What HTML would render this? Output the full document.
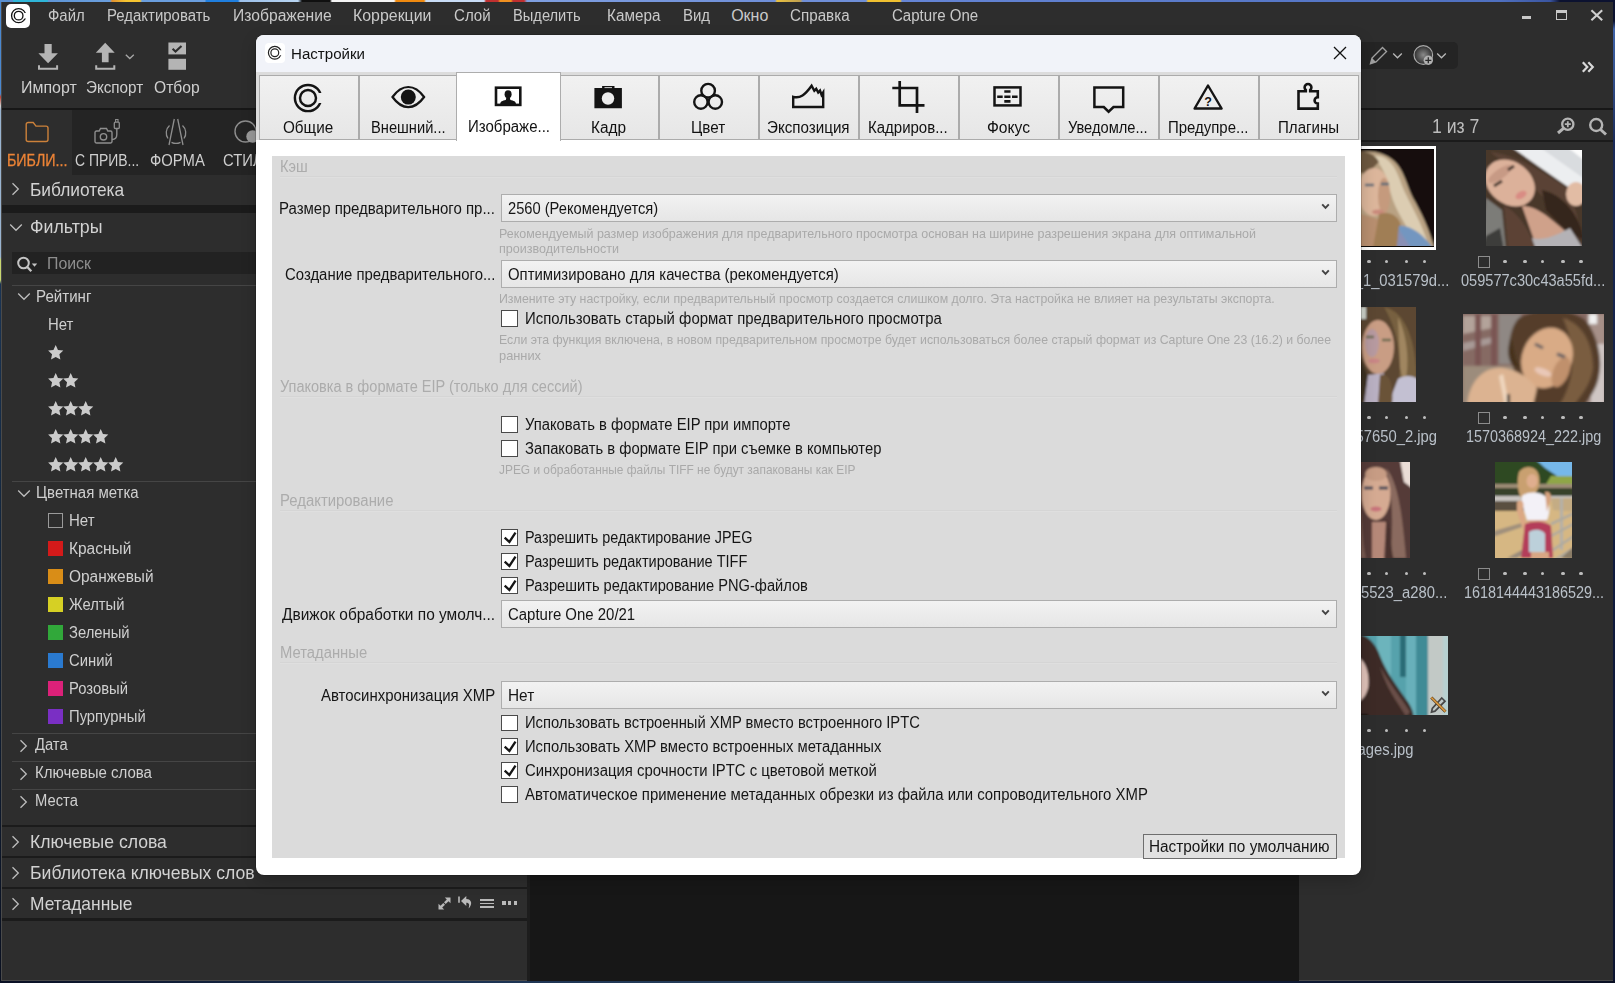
<!DOCTYPE html>
<html lang="ru"><head><meta charset="utf-8"><title>Capture One</title>
<style>

html,body{margin:0;padding:0}
body{width:1615px;height:983px;position:relative;overflow:hidden;background:#0b1020;font-family:'Liberation Sans',sans-serif}
body div,body span,body svg{position:absolute;box-sizing:border-box}
body span{white-space:pre}
#win div,#win span,#win svg,#dlg div,#dlg span,#dlg svg{position:absolute}

</style></head>
<body>
<div style="left:0;top:0;width:1615px;height:2.500px;background:linear-gradient(90deg,#5a8fd0 0,#5a8fd0 13px,#2fb5d8 13px,#2fb5d8 48px,#5f96d6 48px,#6a9ede 110px,#e09030 112px,#f5c430 126px,#f5c430 140px,#6a9ede 142px,#6a9ede 205px,#1f7fe0 206px,#1f7fe0 238px,#9cc0ea 240px,#b8d4f0 298px,#101010 302px,#101010 330px,#f4f4f4 332px,#f4f4f4 394px,#f08a10 396px,#f08a10 424px,#c8dcf5 426px,#c8dcf5 484px,#c03030 486px,#c03030 498px,#f09020 500px,#f09020 511px,#c03030 513px,#c03030 524px,#7f9fe0 527px,#6f8fd8 775px,#e8c040 777px,#c0a050 800px,#6f8fd8 803px,#6f8fd8 866px,#f0c030 868px,#f0c030 900px,#6585d5 902px,#4f70c0 1500px,#3a55a0 1550px,#0c1230 1560px,#0c1230 1615px)"></div>
<div style="left:0;top:2px;width:1.500px;height:981px;background:linear-gradient(180deg,#4a88d0 0,#4a88d0 92px,#c04030 95px,#d0d0d0 104px,#9ab4d0 108px,#9ab4d0 255px,#c8d870 258px,#c8d870 278px,#1a3454 282px,#142840 500px,#0a1020 983px)"></div>
<div style="left:1612px;top:3px;width:3px;height:980px;background:linear-gradient(180deg,#0c1230 0,#0c1230 18px,#3f62a8 26px,#34528f 70px,#1a2a58 140px,#101c40 500px,#0c1430 983px)"></div>
<div style="left:0;top:981px;width:1615px;height:2px;background:linear-gradient(90deg,#0a1024,#1a3050 400px,#28405c 800px,#101c38 1200px,#0a1024)"></div>
<div style="left:1.3px;top:2.2px;width:1611.5px;height:979px;background:#2d2d2d;border:1px solid #4a4a4a;border-width:0 0 1px 1px"></div>
<div style="left:6px;top:4px;width:24px;height:24px;background:#fff;border-radius:5px"></div>
<svg style="left:7.61px;top:5.46px" width="21.28" height="21.28" viewBox="-10.64 -10.64 21.28 21.28"><defs><clipPath id="cl1"><path clip-rule="evenodd" d="M-10.64 -10.64H10.64V10.64H-10.64zM0 -2.75H10.64V2.75H0z"/></clipPath></defs><circle r="4.32" fill="none" stroke="#111" stroke-width="1.32"/><circle r="7.07" fill="none" stroke="#111" stroke-width="1.32" clip-path="url(#cl1)"/></svg>
<span style="left:48.45px;top:5px;font-size:16px;line-height:22px;color:#c9c9c9;transform:scaleX(0.9323);transform-origin:0 0;">Файл</span>
<span style="left:107.35px;top:5px;font-size:16px;line-height:22px;color:#c9c9c9;transform:scaleX(0.9344);transform-origin:0 0;">Редактировать</span>
<span style="left:232.65px;top:5px;font-size:16px;line-height:22px;color:#c9c9c9;transform:scaleX(0.9790);transform-origin:0 0;">Изображение</span>
<span style="left:353.45px;top:5px;font-size:16px;line-height:22px;color:#c9c9c9;transform:scaleX(0.9940);transform-origin:0 0;">Коррекции</span>
<span style="left:453.95px;top:5px;font-size:16px;line-height:22px;color:#c9c9c9;transform:scaleX(0.9428);transform-origin:0 0;">Слой</span>
<span style="left:512.85px;top:5px;font-size:16px;line-height:22px;color:#c9c9c9;transform:scaleX(0.9169);transform-origin:0 0;">Выделить</span>
<span style="left:606.65px;top:5px;font-size:16px;line-height:22px;color:#c9c9c9;transform:scaleX(0.9545);transform-origin:0 0;">Камера</span>
<span style="left:682.55px;top:5px;font-size:16px;line-height:22px;color:#c9c9c9;transform:scaleX(0.9353);transform-origin:0 0;">Вид</span>
<span style="left:731.15px;top:5px;font-size:16px;line-height:22px;color:#c9c9c9;">Окно</span>
<span style="left:789.95px;top:5px;font-size:16px;line-height:22px;color:#c9c9c9;transform:scaleX(0.9492);transform-origin:0 0;">Справка</span>
<span style="left:892.15px;top:5px;font-size:16px;line-height:22px;color:#c9c9c9;transform:scaleX(0.9407);transform-origin:0 0;">Capture One</span>
<div style="left:1522px;top:16px;width:9px;height:3px;background:#c8c8c8;"></div>
<div style="left:1556px;top:10px;width:11.400px;height:10.200px;border:1.300px solid #c8c8c8;border-top-width:3.300px"></div>
<svg style="left:1589px;top:8px" width="16" height="14" viewBox="0 0 16 14"><path d="M2.4 2.2L13.2 12.2M13.2 2.2L2.4 12.2" stroke="#cfcfcf" stroke-width="2.1" fill="none"/></svg>
<svg style="left:30px;top:36px" width="180" height="40" viewBox="30 36 180 40"><path d="M44.500 44h7.200v9.300h6.200L48.100 63.300 38.400 53.300h6.100z" fill="#b4b4b4"/><path d="M39 65.200v3.600h18.100v-3.600" fill="none" stroke="#b4b4b4" stroke-width="2"/><path d="M101.900 62.200h6.700v-9.500h6.100L105.200 42.700 95.800 52.700h6.100z" fill="#b4b4b4"/><path d="M96.200 65.200v3.600h18.100v-3.600" fill="none" stroke="#b4b4b4" stroke-width="2"/><path d="M125.800 54.800l4 3.700 4-3.700" fill="none" stroke="#a8a8a8" stroke-width="1.300"/><rect x="168.400" y="42.500" width="17.600" height="11.900" fill="#b4b4b4"/><rect x="168.400" y="58.800" width="17.600" height="11" fill="#b4b4b4"/><path d="M172.600 48.800l2.900 2.700 6-5.600" fill="none" stroke="#2d2d2d" stroke-width="2.100"/></svg>
<span style="left:20.65px;top:77px;font-size:16px;line-height:22px;color:#cfcfcf;transform:scaleX(0.9954);transform-origin:0 0;">Импорт</span>
<span style="left:85.95px;top:77px;font-size:16px;line-height:22px;color:#cfcfcf;transform:scaleX(0.9510);transform-origin:0 0;">Экспорт</span>
<span style="left:153.95px;top:77px;font-size:16px;line-height:22px;color:#cfcfcf;transform:scaleX(0.9774);transform-origin:0 0;">Отбор</span>
<div style="left:2px;top:107.8px;width:1611px;height:2px;background:#171717;"></div>
<div style="left:2px;top:109.5px;width:526px;height:65px;background:#242424;"></div>
<div style="left:2px;top:109.5px;width:70px;height:65px;background:#2d2d2d;"></div>
<svg style="left:24px;top:120px" width="28" height="24" viewBox="0 0 28 24"><path d="M2.200 4.500a2 2 0 0 1 2-2h5l2.800 3.600h10a2 2 0 0 1 2 2V19.500a2 2 0 0 1-2 2h-17.800a2 2 0 0 1-2-2z" fill="none" stroke="#cc813a" stroke-width="1.4"/></svg>
<span style="left:7.15px;top:150px;font-size:16px;line-height:22px;color:#ee8436;transform:scaleX(0.8915);transform-origin:0 0;-webkit-text-stroke:0.28px #ee8436;">БИБЛИ...</span>
<svg style="left:92px;top:118px" width="30" height="28" viewBox="0 0 30 28"><path d="M3 14.500a1.500 1.500 0 0 1 1.500-1.500h2.700l1.300-2.500h6l1.300 2.500h2.700a1.500 1.500 0 0 1 1.500 1.500v9a1.500 1.500 0 0 1-1.500 1.500h-14a1.500 1.500 0 0 1-1.500-1.500z" fill="none" stroke="#8e8e8e" stroke-width="1.400"/><circle cx="11.500" cy="18.800" r="3.200" fill="none" stroke="#8e8e8e" stroke-width="1.400"/><path d="M20 21.500c3.500 0 4.800-1.500 4.800-5V10.500" fill="none" stroke="#8e8e8e" stroke-width="1.400"/><rect x="22.300" y="4.200" width="5" height="6.300" rx="1" fill="none" stroke="#8e8e8e" stroke-width="1.300"/><path d="M23.600 4V1.500h2.400V4" fill="none" stroke="#8e8e8e" stroke-width="1.100"/></svg>
<span style="left:74.65px;top:150px;font-size:16px;line-height:22px;color:#cfcfcf;transform:scaleX(0.8710);transform-origin:0 0;">С ПРИВ...</span>
<svg style="left:163px;top:117px" width="26" height="30" viewBox="0 0 26 30"><path d="M11.300 2L6 28M14.700 2L20 28" fill="none" stroke="#8e8e8e" stroke-width="1.300"/><path d="M6.500 8.500a10 10 0 0 0-1.500 13M19.500 8.500a10 10 0 0 1 1.500 13M8.500 25.300a10 10 0 0 0 9 0" fill="none" stroke="#8e8e8e" stroke-width="1.300"/></svg>
<span style="left:149.55px;top:150px;font-size:16px;line-height:22px;color:#cfcfcf;transform:scaleX(0.9268);transform-origin:0 0;">ФОРМА</span>
<svg style="left:232px;top:118px" width="30" height="30" viewBox="0 0 30 30"><circle cx="13.500" cy="13.500" r="10.500" fill="none" stroke="#8e8e8e" stroke-width="1.400"/><circle cx="20.500" cy="18.500" r="6.200" fill="#9a9a9a"/></svg>
<span style="left:222.75px;top:150px;font-size:16px;line-height:22px;color:#cfcfcf;transform:scaleX(0.9250);transform-origin:0 0;">СТИЛ</span>
<svg style="left:11px;top:182px" width="9" height="14" viewBox="0 0 9 14"><path d="M1.500 1.200L7.300 7 1.500 12.800" fill="none" stroke="#bdbdbd" stroke-width="1.3"/></svg>
<span style="left:30.04px;top:177px;font-size:18.5px;line-height:26px;color:#d2d2d2;transform:scaleX(0.9356);transform-origin:0 0;">Библиотека</span>
<div style="left:2px;top:205px;width:526px;height:7.5px;background:#1b1b1b;"></div>
<svg style="left:9px;top:223px" width="14" height="9" viewBox="0 0 14 9"><path d="M1.200 1.500L7 7.300 12.800 1.500" fill="none" stroke="#bdbdbd" stroke-width="1.3"/></svg>
<span style="left:30.04px;top:214px;font-size:18.5px;line-height:26px;color:#d2d2d2;transform:scaleX(0.9611);transform-origin:0 0;">Фильтры</span>
<div style="left:12px;top:252px;width:516px;height:22px;background:#222222;"></div>
<svg style="left:16.300px;top:255px" width="24" height="18" viewBox="0 0 24 18"><circle cx="7.500" cy="8" r="5.300" fill="none" stroke="#c4c4c4" stroke-width="2"/><path d="M11.300 12l4 4.300" stroke="#c4c4c4" stroke-width="2.400" fill="none"/><path d="M15.800 8.500h5.400l-2.700 3.200z" fill="#c4c4c4"/></svg>
<span style="left:47.15px;top:253px;font-size:16px;line-height:22px;color:#8e8e8e;transform:scaleX(0.9918);transform-origin:0 0;">Поиск</span>
<div style="left:12px;top:284.5px;width:516px;height:1px;background:#454545;"></div>
<svg style="left:17px;top:292px" width="14" height="9" viewBox="0 0 14 9"><path d="M1.200 1.500L7 7.300 12.800 1.500" fill="none" stroke="#bdbdbd" stroke-width="1.3"/></svg>
<span style="left:35.55px;top:286px;font-size:16px;line-height:22px;color:#cfcfcf;transform:scaleX(0.9443);transform-origin:0 0;">Рейтинг</span>
<span style="left:47.75px;top:314px;font-size:16px;line-height:22px;color:#cfcfcf;transform:scaleX(0.9314);transform-origin:0 0;">Нет</span>
<svg style="left:47.800px;top:345px" width="17" height="16" viewBox="0 0 17 16" fill="#cbcbcb"><path transform="translate(0 0)" d="M7.70 0.05L9.96 4.94L15.31 5.58L11.36 9.24L12.40 14.52L7.70 11.90L3.00 14.52L4.04 9.24L0.09 5.58L5.44 4.94z"/></svg>
<svg style="left:47.800px;top:373px" width="32" height="16" viewBox="0 0 32 16" fill="#cbcbcb"><path transform="translate(0 0)" d="M7.70 0.05L9.96 4.94L15.31 5.58L11.36 9.24L12.40 14.52L7.70 11.90L3.00 14.52L4.04 9.24L0.09 5.58L5.44 4.94z"/><path transform="translate(15 0)" d="M7.70 0.05L9.96 4.94L15.31 5.58L11.36 9.24L12.40 14.52L7.70 11.90L3.00 14.52L4.04 9.24L0.09 5.58L5.44 4.94z"/></svg>
<svg style="left:47.800px;top:401px" width="47" height="16" viewBox="0 0 47 16" fill="#cbcbcb"><path transform="translate(0 0)" d="M7.70 0.05L9.96 4.94L15.31 5.58L11.36 9.24L12.40 14.52L7.70 11.90L3.00 14.52L4.04 9.24L0.09 5.58L5.44 4.94z"/><path transform="translate(15 0)" d="M7.70 0.05L9.96 4.94L15.31 5.58L11.36 9.24L12.40 14.52L7.70 11.90L3.00 14.52L4.04 9.24L0.09 5.58L5.44 4.94z"/><path transform="translate(30 0)" d="M7.70 0.05L9.96 4.94L15.31 5.58L11.36 9.24L12.40 14.52L7.70 11.90L3.00 14.52L4.04 9.24L0.09 5.58L5.44 4.94z"/></svg>
<svg style="left:47.800px;top:429px" width="62" height="16" viewBox="0 0 62 16" fill="#cbcbcb"><path transform="translate(0 0)" d="M7.70 0.05L9.96 4.94L15.31 5.58L11.36 9.24L12.40 14.52L7.70 11.90L3.00 14.52L4.04 9.24L0.09 5.58L5.44 4.94z"/><path transform="translate(15 0)" d="M7.70 0.05L9.96 4.94L15.31 5.58L11.36 9.24L12.40 14.52L7.70 11.90L3.00 14.52L4.04 9.24L0.09 5.58L5.44 4.94z"/><path transform="translate(30 0)" d="M7.70 0.05L9.96 4.94L15.31 5.58L11.36 9.24L12.40 14.52L7.70 11.90L3.00 14.52L4.04 9.24L0.09 5.58L5.44 4.94z"/><path transform="translate(45 0)" d="M7.70 0.05L9.96 4.94L15.31 5.58L11.36 9.24L12.40 14.52L7.70 11.90L3.00 14.52L4.04 9.24L0.09 5.58L5.44 4.94z"/></svg>
<svg style="left:47.800px;top:457px" width="77" height="16" viewBox="0 0 77 16" fill="#cbcbcb"><path transform="translate(0 0)" d="M7.70 0.05L9.96 4.94L15.31 5.58L11.36 9.24L12.40 14.52L7.70 11.90L3.00 14.52L4.04 9.24L0.09 5.58L5.44 4.94z"/><path transform="translate(15 0)" d="M7.70 0.05L9.96 4.94L15.31 5.58L11.36 9.24L12.40 14.52L7.70 11.90L3.00 14.52L4.04 9.24L0.09 5.58L5.44 4.94z"/><path transform="translate(30 0)" d="M7.70 0.05L9.96 4.94L15.31 5.58L11.36 9.24L12.40 14.52L7.70 11.90L3.00 14.52L4.04 9.24L0.09 5.58L5.44 4.94z"/><path transform="translate(45 0)" d="M7.70 0.05L9.96 4.94L15.31 5.58L11.36 9.24L12.40 14.52L7.70 11.90L3.00 14.52L4.04 9.24L0.09 5.58L5.44 4.94z"/><path transform="translate(60 0)" d="M7.70 0.05L9.96 4.94L15.31 5.58L11.36 9.24L12.40 14.52L7.70 11.90L3.00 14.52L4.04 9.24L0.09 5.58L5.44 4.94z"/></svg>
<div style="left:12px;top:480.5px;width:516px;height:1px;background:#454545;"></div>
<svg style="left:17px;top:489px" width="14" height="9" viewBox="0 0 14 9"><path d="M1.200 1.500L7 7.300 12.800 1.500" fill="none" stroke="#bdbdbd" stroke-width="1.3"/></svg>
<span style="left:35.55px;top:482px;font-size:16px;line-height:22px;color:#cfcfcf;transform:scaleX(0.9365);transform-origin:0 0;">Цветная метка</span>
<div style="left:48px;top:513px;width:15px;height:15px;border:1px solid #9a9a9a"></div>
<span style="left:68.65px;top:510px;font-size:16px;line-height:22px;color:#cfcfcf;transform:scaleX(0.9387);transform-origin:0 0;">Нет</span>
<div style="left:48px;top:541px;width:15px;height:15px;background:#d41a1a;"></div>
<span style="left:68.65px;top:538px;font-size:16px;line-height:22px;color:#cfcfcf;transform:scaleX(0.9672);transform-origin:0 0;">Красный</span>
<div style="left:48px;top:569px;width:15px;height:15px;background:#d98d17;"></div>
<span style="left:68.65px;top:566px;font-size:16px;line-height:22px;color:#cfcfcf;transform:scaleX(0.9652);transform-origin:0 0;">Оранжевый</span>
<div style="left:48px;top:597px;width:15px;height:15px;background:#d6d024;"></div>
<span style="left:68.65px;top:594px;font-size:16px;line-height:22px;color:#cfcfcf;transform:scaleX(0.9223);transform-origin:0 0;">Желтый</span>
<div style="left:48px;top:625px;width:15px;height:15px;background:#31a83a;"></div>
<span style="left:68.65px;top:622px;font-size:16px;line-height:22px;color:#cfcfcf;transform:scaleX(0.9250);transform-origin:0 0;">Зеленый</span>
<div style="left:48px;top:653px;width:15px;height:15px;background:#2a7ad0;"></div>
<span style="left:68.65px;top:650px;font-size:16px;line-height:22px;color:#cfcfcf;transform:scaleX(0.9250);transform-origin:0 0;">Синий</span>
<div style="left:48px;top:681px;width:15px;height:15px;background:#dc2179;"></div>
<span style="left:68.65px;top:678px;font-size:16px;line-height:22px;color:#cfcfcf;transform:scaleX(0.9250);transform-origin:0 0;">Розовый</span>
<div style="left:48px;top:709px;width:15px;height:15px;background:#7a2fc4;"></div>
<span style="left:68.65px;top:706px;font-size:16px;line-height:22px;color:#cfcfcf;transform:scaleX(0.9250);transform-origin:0 0;">Пурпурный</span>
<div style="left:12px;top:732.5px;width:516px;height:1px;background:#454545;"></div>
<svg style="left:19px;top:738.5px" width="9" height="14" viewBox="0 0 9 14"><path d="M1.500 1.200L7.300 7 1.500 12.800" fill="none" stroke="#bdbdbd" stroke-width="1.3"/></svg>
<span style="left:35.05px;top:734px;font-size:16px;line-height:22px;color:#cfcfcf;transform:scaleX(0.9222);transform-origin:0 0;">Дата</span>
<div style="left:12px;top:760.5px;width:516px;height:1px;background:#454545;"></div>
<svg style="left:19px;top:766.5px" width="9" height="14" viewBox="0 0 9 14"><path d="M1.500 1.200L7.300 7 1.500 12.800" fill="none" stroke="#bdbdbd" stroke-width="1.3"/></svg>
<span style="left:35.05px;top:762px;font-size:16px;line-height:22px;color:#cfcfcf;transform:scaleX(0.9395);transform-origin:0 0;">Ключевые слова</span>
<div style="left:12px;top:788.5px;width:516px;height:1px;background:#454545;"></div>
<svg style="left:19px;top:794.5px" width="9" height="14" viewBox="0 0 9 14"><path d="M1.500 1.200L7.300 7 1.500 12.800" fill="none" stroke="#bdbdbd" stroke-width="1.3"/></svg>
<span style="left:35.05px;top:790px;font-size:16px;line-height:22px;color:#cfcfcf;transform:scaleX(0.9231);transform-origin:0 0;">Места</span>
<div style="left:2px;top:825px;width:526px;height:2.3px;background:#1b1b1b;"></div>
<svg style="left:11px;top:834.6px" width="9" height="14" viewBox="0 0 9 14"><path d="M1.500 1.200L7.300 7 1.500 12.800" fill="none" stroke="#bdbdbd" stroke-width="1.3"/></svg>
<span style="left:30.24px;top:829px;font-size:18.5px;line-height:26px;color:#d2d2d2;transform:scaleX(0.9509);transform-origin:0 0;">Ключевые слова</span>
<div style="left:2px;top:856px;width:526px;height:2.3px;background:#1b1b1b;"></div>
<svg style="left:11px;top:865.5px" width="9" height="14" viewBox="0 0 9 14"><path d="M1.500 1.200L7.300 7 1.500 12.800" fill="none" stroke="#bdbdbd" stroke-width="1.3"/></svg>
<span style="left:30.04px;top:860px;font-size:18.5px;line-height:26px;color:#d2d2d2;transform:scaleX(0.9517);transform-origin:0 0;">Библиотека ключевых слов</span>
<div style="left:2px;top:887px;width:526px;height:2.3px;background:#1b1b1b;"></div>
<svg style="left:11px;top:896.5px" width="9" height="14" viewBox="0 0 9 14"><path d="M1.500 1.200L7.300 7 1.500 12.800" fill="none" stroke="#bdbdbd" stroke-width="1.3"/></svg>
<span style="left:30.04px;top:891px;font-size:18.5px;line-height:26px;color:#d2d2d2;transform:scaleX(0.9400);transform-origin:0 0;">Метаданные</span>
<div style="left:2px;top:918px;width:526px;height:2.6px;background:#1b1b1b;"></div>
<svg style="left:437px;top:896px" width="15" height="15" viewBox="0 0 15 15"><path d="M13.500 1.500H7.800l2 2L7 6.300 8.700 8l2.800-2.800 2 2zM1.500 13.500h5.700l-2-2L8 8.700 6.300 7 3.500 9.800l-2-2z" fill="#b9b9b9"/></svg>
<svg style="left:457px;top:895px" width="17" height="16" viewBox="0 0 17 16"><path d="M2 1.500v6.300" stroke="#b9b9b9" stroke-width="1.600" fill="none"/><path d="M9.300 1L4 6l5.300 5V7.800c2.500 0 3.700 1.500 2.200 5.700 4-3.300 3.800-9.500-2.200-9.500z" fill="#b9b9b9"/></svg>
<div style="left:480px;top:899.0px;width:14px;height:1.8px;background:#b9b9b9;"></div>
<div style="left:480px;top:902.7px;width:14px;height:1.8px;background:#b9b9b9;"></div>
<div style="left:480px;top:906.4px;width:14px;height:1.8px;background:#b9b9b9;"></div>
<div style="left:502.0px;top:901.3px;width:3.6px;height:3.3px;background:#b9b9b9;"></div>
<div style="left:507.8px;top:901.3px;width:3.6px;height:3.3px;background:#b9b9b9;"></div>
<div style="left:513.6px;top:901.3px;width:3.6px;height:3.3px;background:#b9b9b9;"></div>
<div style="left:527px;top:109.5px;width:2.5px;height:871.5px;background:#1d1d1d;"></div>
<div style="left:529.5px;top:109.5px;width:769.5px;height:871.5px;background:#171717;"></div>
<div style="left:1340px;top:42px;width:118px;height:27px;background:#242424;border-radius:5px"></div>
<svg style="left:1369px;top:46px" width="20" height="19" viewBox="0 0 20 19"><path d="M13.500 1.500l4 4L7 16l-5.500 1.700L3 12z" fill="none" stroke="#a0a0a0" stroke-width="1.400"/><path d="M3 12l4 4-5.500 1.700z" fill="#a0a0a0"/></svg>
<svg style="left:1392px;top:52px" width="11" height="8" viewBox="0 0 11 8"><path d="M1.200 1.500L5.500 5.800 9.800 1.500" fill="none" stroke="#b8b8b8" stroke-width="1.300"/></svg>
<svg style="left:1412px;top:44px" width="24" height="22" viewBox="0 0 24 22"><defs><radialGradient id="rg" cx="0.5" cy="0.5" r="0.5"><stop offset="0" stop-color="#8a8a8a"/><stop offset="1" stop-color="#2e2e2e"/></radialGradient></defs><circle cx="11.300" cy="11" r="9.300" fill="url(#rg)" stroke="#a8a8a8" stroke-width="1.200"/><circle cx="16.300" cy="16.300" r="4.700" fill="#b0b0b0"/><path d="M16.300 13.300v6M13.300 16.300h6" stroke="#2a2a2a" stroke-width="1.300"/></svg>
<svg style="left:1436px;top:52px" width="11" height="8" viewBox="0 0 11 8"><path d="M1.200 1.500L5.500 5.800 9.800 1.500" fill="none" stroke="#b8b8b8" stroke-width="1.300"/></svg>
<svg style="left:1581px;top:61px" width="14" height="12" viewBox="0 0 14 12"><path d="M1.800 1.200L6.300 6 1.800 10.800M7.300 1.200L11.800 6 7.300 10.800" fill="none" stroke="#d8d8d8" stroke-width="2.200"/></svg>
<span style="left:1432.43px;top:113px;font-size:19.5px;line-height:27px;color:#bcbcbc;transform:scaleX(0.9050);transform-origin:0 0;">1 из 7</span>
<svg style="left:1556px;top:117px" width="20" height="18" viewBox="0 0 20 18"><circle cx="11.800" cy="7.200" r="5.600" fill="none" stroke="#b4b4b4" stroke-width="2.300"/><path d="M7.500 11.300L2 16" stroke="#b4b4b4" stroke-width="3" fill="none"/><path d="M11.800 4.200v6M8.800 7.200h6" stroke="#b4b4b4" stroke-width="1.800"/></svg>
<svg style="left:1588px;top:117px" width="20" height="19" viewBox="0 0 20 19"><circle cx="8.200" cy="8" r="6" fill="none" stroke="#b4b4b4" stroke-width="2.400"/><path d="M12.500 12.500l5.500 5" stroke="#b4b4b4" stroke-width="3" fill="none"/></svg>
<div style="left:1299px;top:140px;width:313.5px;height:2px;background:#1b1b1b;"></div>
<div style="left:1333px;top:146px;width:103.300px;height:104px;background:#fff"></div><div style="left:1335.500px;top:148.700px;width:98px;height:98.300px;background:#0a0706"></div>
<svg style="left:1336.5px;top:149.5px" width="97" height="96.5" viewBox="0 0 97 96.5"><defs><filter id="bl1" x="-20%" y="-20%" width="140%" height="140%"><feGaussianBlur stdDeviation="1.2"/></filter><clipPath id="cp1"><rect x="0" y="0" width="97" height="96.5"/></clipPath></defs><g clip-path="url(#cp1)"><g filter="url(#bl1)"><rect x="-10" y="-10" width="120" height="120" fill="#130d0b"/><path d="M14 4C30-2 50 2 60 14C68 24 70 36 76 48C84 62 92 78 98 100H20L10 40z" fill="#b9a283"/><path d="M36 6C50 4 58 16 63 30C68 46 80 62 90 90L80 96C70 76 58 60 54 44C50 28 46 16 36 6z" fill="#dccdb2"/><path d="M18 2C28 0 38 4 42 12L30 24 18 22z" fill="#6d583f"/><ellipse cx="37" cy="42" rx="16" ry="24" fill="#dcb69b"/><ellipse cx="47" cy="46" rx="6" ry="18" fill="#c59a7d"/><ellipse cx="41" cy="62" rx="6" ry="2.500" fill="#c98a7c"/><path d="M28 35h9M44 34h8" stroke="#5a6a78" stroke-width="2.500"/><path d="M24 64L44 70 42 98H22z" fill="#b88f70"/><path d="M42 64C54 60 66 68 64 82L60 98H36z" fill="#a07e55"/><path d="M62 76C72 74 86 84 96 98H60z" fill="#7396c0"/><path d="M62 80L74 98H60z" fill="#8a8fb4"/></g></g></svg>
<svg style="left:1486px;top:150px" width="96" height="96" viewBox="0 0 96 96"><defs><filter id="bl2" x="-20%" y="-20%" width="140%" height="140%"><feGaussianBlur stdDeviation="1.3"/></filter><clipPath id="cp2"><rect x="0" y="0" width="96" height="96"/></clipPath></defs><g clip-path="url(#cp2)"><g filter="url(#bl2)"><rect x="-10" y="-10" width="120" height="120" fill="#4a372b"/><path d="M24-4H100V50L78 34 52 16z" fill="#eceef0"/><path d="M24-4H52L100 30V-4z" fill="#d9dcdf"/><path d="M50-4H80L100 12V-4z" fill="#fbfbfb"/><path d="M0 48L16 60 20 100H-4z" fill="#7c7b78"/><path d="M0 86L14 78 18 100H-4z" fill="#3c3c3a"/><path d="M4 2C30 4 60 24 84 40L98 92 70 60 40 30z" fill="#5a4334"/><path d="M56 40C74 44 92 60 98 90L80 80 60 60z" fill="#35251e"/><ellipse cx="24" cy="33" rx="27" ry="21" transform="rotate(38 24 33)" fill="#dcb19a"/><ellipse cx="14" cy="24" rx="14" ry="5" transform="rotate(-35 14 24)" fill="#c79a85"/><ellipse cx="35" cy="45" rx="6" ry="3.500" transform="rotate(-30 35 45)" fill="#d98c84"/><path d="M8 36l8-5M22 20l6-4" stroke="#4a3a32" stroke-width="3"/><path d="M36 56C50 56 62 66 80 82L72 92 48 90z" fill="#cfa18a"/><ellipse cx="90" cy="44" rx="10" ry="12" fill="#e2bca4"/><path d="M46 88C60 92 76 82 84 78L98 100H48z" fill="#b4b2b6"/><path d="M18 56C30 60 44 80 50 100H22z" fill="#5b4335"/></g></g></svg>
<svg style="left:1354px;top:307px" width="62" height="95" viewBox="0 0 62 95"><defs><filter id="bl3" x="-20%" y="-20%" width="140%" height="140%"><feGaussianBlur stdDeviation="1.2"/></filter><clipPath id="cp3"><rect x="0" y="0" width="62" height="95"/></clipPath></defs><g clip-path="url(#cp3)"><g filter="url(#bl3)"><rect x="-10" y="-10" width="90" height="120" fill="#5c4630"/><path d="M30 0C50 4 60 30 62 60V96H40C50 70 48 30 30 0z" fill="#77603f"/><path d="M44 10C54 30 56 60 50 80L46 60z" fill="#a08660"/><ellipse cx="24" cy="40" rx="16" ry="27" fill="#c99d84"/><ellipse cx="18" cy="36" rx="7" ry="14" fill="#b79aa0"/><ellipse cx="20" cy="54" rx="6" ry="2.500" fill="#c98686"/><path d="M12 30h8M28 33h9" stroke="#6a6a50" stroke-width="2.500"/><path d="M6 50L14 70 10 98H-4z" fill="#3c3024"/><path d="M14 68L30 66 24 98H10z" fill="#b9b0c2"/><path d="M44 72C54 66 64 70 66 76V98H34z" fill="#c3c0d2"/><path d="M26 68C34 66 40 72 38 98H24z" fill="#6a5238"/><path d="M0 0H12V12H0z" fill="#cfd4cc"/></g></g></svg>
<svg style="left:1463px;top:314px" width="141" height="88" viewBox="0 0 141 88"><defs><filter id="bl4" x="-20%" y="-20%" width="140%" height="140%"><feGaussianBlur stdDeviation="1.4"/></filter><clipPath id="cp4"><rect x="0" y="0" width="141" height="88"/></clipPath></defs><g clip-path="url(#cp4)"><g filter="url(#bl4)"><rect x="-10" y="-10" width="170" height="110" fill="#866a64"/><path d="M0 2H34V13L0 20z" fill="#b3a39a"/><path d="M0 29L30 23V29L0 37z" fill="#a89a96"/><path d="M12 0H18V56H12zM28 0H34V56H28z" fill="#7a5552"/><path d="M36 0H58V50H36z" fill="#8f8884"/><path d="M0 52H60V90H0z" fill="#9c8c7c"/><path d="M124 0H142V90H124z" fill="#a69088"/><path d="M128 30H142V90H128z" fill="#cfc6c4"/><path d="M126 0H134V10H126z" fill="#f0f0f0"/><path d="M56 4C70-6 110-8 124 8C134 22 140 44 136 62C134 76 124 86 122 92H66C60 70 44 50 46 30C48 18 50 10 56 4z" fill="#553e29"/><path d="M100 4C120 10 130 30 130 54C128 70 118 82 110 92H96C110 70 116 40 100 4z" fill="#7a5d40"/><path d="M48 24C52 36 52 48 58 54L50 52C44 44 44 34 48 24z" fill="#46331f"/><ellipse cx="84" cy="44" rx="25" ry="31" transform="rotate(22 84 44)" fill="#d9ab86"/><ellipse cx="98" cy="58" rx="8" ry="16" transform="rotate(22 98 58)" fill="#c0906c"/><ellipse cx="80" cy="58" rx="9" ry="3.500" transform="rotate(22 80 58)" fill="#e9c8b8"/><path d="M72 30l8 4M94 40l8 3" stroke="#5a5a60" stroke-width="3"/><path d="M4 92C6 66 22 52 40 54C54 56 64 62 74 74L70 92z" fill="#dcb391"/><path d="M40 60L46 92H42L36 62z" fill="#f0d8c0"/><path d="M44 80H47V92H44z" fill="#1c1c20"/></g></g></svg>
<svg style="left:1346px;top:462px" width="64" height="96" viewBox="0 0 64 96"><defs><filter id="bl5" x="-20%" y="-20%" width="140%" height="140%"><feGaussianBlur stdDeviation="1.2"/></filter><clipPath id="cp5"><rect x="0" y="0" width="64" height="96"/></clipPath></defs><g clip-path="url(#cp5)"><g filter="url(#bl5)"><rect x="-10" y="-10" width="90" height="120" fill="#553b37"/><path d="M54-2H66V26L58 20z" fill="#eaddd6"/><path d="M40 6C52 20 56 50 60 96H44C48 60 46 30 40 6z" fill="#8a6a5e"/><path d="M14 40C16 60 16 80 20 96H12z" fill="#7a5c52"/><ellipse cx="30" cy="32" rx="14.500" ry="26" fill="#d5aa92"/><ellipse cx="30" cy="12" rx="11" ry="7" fill="#c79c84"/><path d="M18 26h9M33 26h9" stroke="#4a4a58" stroke-width="3"/><ellipse cx="30" cy="47" rx="5.500" ry="2.500" fill="#c8727a"/><path d="M26 60L40 60 38 98H26z" fill="#b58878"/><path d="M40 56C46 66 44 86 48 98H40z" fill="#4a322e"/></g></g></svg>
<svg style="left:1495px;top:462px" width="77" height="96" viewBox="0 0 77 96"><defs><filter id="bl6" x="-20%" y="-20%" width="140%" height="140%"><feGaussianBlur stdDeviation="1.0"/></filter><clipPath id="cp6"><rect x="0" y="0" width="77" height="96"/></clipPath></defs><g clip-path="url(#cp6)"><g filter="url(#bl6)"><rect x="-10" y="-10" width="100" height="120" fill="#d6b783"/><rect x="-5" y="-5" width="90" height="42" fill="#2f4a24"/><path d="M38-5H82V14L62 14 50 6z" fill="#76b8ea"/><path d="M56 14H82V24H50z" fill="#8fa646"/><rect x="-5" y="22" width="90" height="4" fill="#9c8c74"/><rect x="-5" y="26" width="90" height="9" fill="#39432a"/><rect x="-5" y="34" width="90" height="5" fill="#c8c4c0"/><rect x="-5" y="39" width="34" height="10" fill="#5a5040"/><path d="M-5 70L30 60V64L-5 76z" fill="#a0907c"/><path d="M12 96L34 84 36 88 22 96z" fill="#9a8c7c"/><path d="M56 36H84V50L58 48z" fill="#c4ac84"/><rect x="65" y="36" width="3" height="52" fill="#b4b0a8"/><path d="M56 62L82 50M56 74L82 60M58 88L82 72M60 98L82 84" stroke="#aeaaa0" stroke-width="2.500" fill="none"/><path d="M66 96L84 80V98z" fill="#8a7c66"/><path d="M24 10C30 2 42 4 44 14C46 24 42 30 38 34L26 36C22 28 22 18 24 10z" fill="#c9a070"/><ellipse cx="37" cy="19" rx="5.500" ry="7" fill="#dfae8e"/><path d="M27 34C34 28 48 30 52 36C56 44 54 54 52 58L32 58C30 50 26 42 27 34z" fill="#f3f1f7"/><path d="M22 40C26 36 30 40 28 46L32 66 28 68 22 50z" fill="#dba884"/><path d="M50 30C56 28 58 36 54 42L52 50z" fill="#d6a27e"/><path d="M32 58H52L50 62H33z" fill="#d9a888"/><path d="M30 62C40 58 52 60 56 64L58 96H26z" fill="#b43c5a"/><path d="M34 70C40 66 48 68 50 72L50 90 34 90z" fill="#bcd0da"/><path d="M36 90H54V98H36z" fill="#d8a684"/></g></g></svg>
<svg style="left:1322px;top:636px" width="126" height="79" viewBox="0 0 126 79"><defs><filter id="bl7" x="-20%" y="-20%" width="140%" height="140%"><feGaussianBlur stdDeviation="1.2"/></filter><clipPath id="cp7"><rect x="0" y="0" width="126" height="79"/></clipPath></defs><g clip-path="url(#cp7)"><g filter="url(#bl7)"><rect x="-10" y="-10" width="150" height="100" fill="#56a2ac"/><rect x="55" y="-5" width="14" height="90" fill="#6cb4bc"/><rect x="78" y="-5" width="6" height="46" fill="#2a6c76"/><rect x="84" y="-5" width="10" height="90" fill="#67b0ba"/><rect x="94" y="-5" width="12" height="90" fill="#3f8b96"/><rect x="106" y="-5" width="30" height="90" fill="#c2c9c6"/><rect x="121" y="-5" width="10" height="90" fill="#b7d0d0"/><path d="M30-4C46-2 54 8 58 20C64 36 76 52 86 66C90 72 92 78 92 84H20z" fill="#3c2a27"/><path d="M58 30C66 46 78 60 88 76L84 80C74 64 64 52 58 30z" fill="#6a5048"/><path d="M36 22C44 24 48 40 46 52C44 60 40 64 36 66z" fill="#e3c5bc"/><path d="M30 78H46V84H30z" fill="#101010"/></g></g></svg>
<svg style="left:1429px;top:695px" width="19" height="19" viewBox="0 0 19 19"><path d="M12.800 3l3.200 3.200L6 16.200 2.500 17l.8-3.500z" fill="none" stroke="#474747" stroke-width="1.700"/><path d="M2.300 2.500L16.500 16.700" stroke="#5a4020" stroke-width="3"/><path d="M2.300 2.500L16.500 16.700" stroke="#dc9a40" stroke-width="1.700"/></svg>
<div style="left:1367.0px;top:259.9px;width:3.600px;height:3.600px;border-radius:50%;background:#bdbdbd"></div>
<div style="left:1384.9px;top:259.9px;width:3.600px;height:3.600px;border-radius:50%;background:#bdbdbd"></div>
<div style="left:1404.8px;top:259.9px;width:3.600px;height:3.600px;border-radius:50%;background:#bdbdbd"></div>
<div style="left:1422.7px;top:259.9px;width:3.600px;height:3.600px;border-radius:50%;background:#bdbdbd"></div>
<div style="left:1503.0px;top:259.9px;width:3.600px;height:3.600px;border-radius:50%;background:#bdbdbd"></div>
<div style="left:1523.0px;top:259.9px;width:3.600px;height:3.600px;border-radius:50%;background:#bdbdbd"></div>
<div style="left:1540.9px;top:259.9px;width:3.600px;height:3.600px;border-radius:50%;background:#bdbdbd"></div>
<div style="left:1561.1000000000001px;top:259.9px;width:3.600px;height:3.600px;border-radius:50%;background:#bdbdbd"></div>
<div style="left:1579.0px;top:259.9px;width:3.600px;height:3.600px;border-radius:50%;background:#bdbdbd"></div>
<div style="left:1478px;top:255.89999999999998px;width:12px;height:12px;border:1px solid #8c8c8c"></div>
<span style="left:1347.40px;top:270px;font-size:16px;line-height:22px;color:#b9c0c8;transform:scaleX(0.9250);transform-origin:100% 0;">_1_031579d...</span>
<span style="left:1460.55px;top:270px;font-size:16px;line-height:22px;color:#b9c0c8;transform:scaleX(0.9105);transform-origin:0 0;">059577c30c43a55fd...</span>
<div style="left:1367.0px;top:415.8px;width:3.600px;height:3.600px;border-radius:50%;background:#bdbdbd"></div>
<div style="left:1384.9px;top:415.8px;width:3.600px;height:3.600px;border-radius:50%;background:#bdbdbd"></div>
<div style="left:1404.8px;top:415.8px;width:3.600px;height:3.600px;border-radius:50%;background:#bdbdbd"></div>
<div style="left:1422.7px;top:415.8px;width:3.600px;height:3.600px;border-radius:50%;background:#bdbdbd"></div>
<div style="left:1503.0px;top:415.8px;width:3.600px;height:3.600px;border-radius:50%;background:#bdbdbd"></div>
<div style="left:1523.0px;top:415.8px;width:3.600px;height:3.600px;border-radius:50%;background:#bdbdbd"></div>
<div style="left:1540.9px;top:415.8px;width:3.600px;height:3.600px;border-radius:50%;background:#bdbdbd"></div>
<div style="left:1561.1000000000001px;top:415.8px;width:3.600px;height:3.600px;border-radius:50%;background:#bdbdbd"></div>
<div style="left:1579.0px;top:415.8px;width:3.600px;height:3.600px;border-radius:50%;background:#bdbdbd"></div>
<div style="left:1478px;top:411.8px;width:12px;height:12px;border:1px solid #8c8c8c"></div>
<span style="left:1348.54px;top:426px;font-size:16px;line-height:22px;color:#b9c0c8;transform:scaleX(0.9250);transform-origin:100% 0;">57650_2.jpg</span>
<span style="left:1466.25px;top:426px;font-size:16px;line-height:22px;color:#b9c0c8;transform:scaleX(0.8990);transform-origin:0 0;">1570368924_222.jpg</span>
<div style="left:1367.0px;top:571.8000000000001px;width:3.600px;height:3.600px;border-radius:50%;background:#bdbdbd"></div>
<div style="left:1384.9px;top:571.8000000000001px;width:3.600px;height:3.600px;border-radius:50%;background:#bdbdbd"></div>
<div style="left:1404.8px;top:571.8000000000001px;width:3.600px;height:3.600px;border-radius:50%;background:#bdbdbd"></div>
<div style="left:1422.7px;top:571.8000000000001px;width:3.600px;height:3.600px;border-radius:50%;background:#bdbdbd"></div>
<div style="left:1503.0px;top:571.8000000000001px;width:3.600px;height:3.600px;border-radius:50%;background:#bdbdbd"></div>
<div style="left:1523.0px;top:571.8000000000001px;width:3.600px;height:3.600px;border-radius:50%;background:#bdbdbd"></div>
<div style="left:1540.9px;top:571.8000000000001px;width:3.600px;height:3.600px;border-radius:50%;background:#bdbdbd"></div>
<div style="left:1561.1000000000001px;top:571.8000000000001px;width:3.600px;height:3.600px;border-radius:50%;background:#bdbdbd"></div>
<div style="left:1579.0px;top:571.8000000000001px;width:3.600px;height:3.600px;border-radius:50%;background:#bdbdbd"></div>
<div style="left:1478px;top:567.8000000000001px;width:12px;height:12px;border:1px solid #8c8c8c"></div>
<span style="left:1344.50px;top:582px;font-size:16px;line-height:22px;color:#b9c0c8;transform:scaleX(0.9250);transform-origin:100% 0;">15523_a280...</span>
<span style="left:1463.85px;top:582px;font-size:16px;line-height:22px;color:#b9c0c8;transform:scaleX(0.8996);transform-origin:0 0;">1618144443186529...</span>
<div style="left:1367.0px;top:728.6px;width:3.600px;height:3.600px;border-radius:50%;background:#bdbdbd"></div>
<div style="left:1384.9px;top:728.6px;width:3.600px;height:3.600px;border-radius:50%;background:#bdbdbd"></div>
<div style="left:1404.8px;top:728.6px;width:3.600px;height:3.600px;border-radius:50%;background:#bdbdbd"></div>
<div style="left:1422.7px;top:728.6px;width:3.600px;height:3.600px;border-radius:50%;background:#bdbdbd"></div>
<span style="left:1352.93px;top:739px;font-size:16px;line-height:22px;color:#b9c0c8;transform:scaleX(0.9250);transform-origin:100% 0;">ages.jpg</span>
<div style="left:256px;top:34.800px;width:1104.700px;height:840px;background:#fff;border-radius:8px;box-shadow:0 0 0 .6px rgba(0,0,0,.28),0 5px 16px 0 rgba(0,0,0,.2)"></div>
<div style="left:256px;top:34.800px;width:1104.700px;height:37.200px;background:#f1f3f9;border-radius:8px 8px 0 0"></div>
<div style="left:256px;top:72px;width:1104.7px;height:68px;background:#dcdcdc;"></div>
<div style="left:265px;top:43px;width:20px;height:20px;background:#fff;border-radius:4px"></div>
<svg style="left:264.99px;top:43.29px" width="19.62" height="19.62" viewBox="-9.81 -9.81 19.62 19.62"><defs><clipPath id="cl2"><path clip-rule="evenodd" d="M-9.81 -9.81H9.81V9.81H-9.81zM0 -2.49H9.81V2.49H0z"/></clipPath></defs><circle r="3.90" fill="none" stroke="#222" stroke-width="1.20"/><circle r="6.39" fill="none" stroke="#222" stroke-width="1.20" clip-path="url(#cl2)"/></svg>
<span style="left:290.62px;top:43px;font-size:15.5px;line-height:22px;color:#111;transform:scaleX(0.9740);transform-origin:0 0;">Настройки</span>
<svg style="left:1333px;top:46px" width="14" height="14" viewBox="0 0 14 14"><path d="M1 1l12 12M13 1L1 13" stroke="#111" stroke-width="1.300" fill="none"/></svg>
<div style="left:259px;top:75px;width:100px;height:65px;border:1px solid #ababab;background:linear-gradient(180deg,#f1f1f1,#e6e6e6)"></div>
<span style="left:283.25px;top:117px;font-size:16px;line-height:22px;color:#111;transform:scaleX(0.9538);transform-origin:0 0;">Общие</span>
<div style="left:359px;top:75px;width:100px;height:65px;border:1px solid #ababab;background:linear-gradient(180deg,#f1f1f1,#e6e6e6)"></div>
<span style="left:371.15px;top:117px;font-size:16px;line-height:22px;color:#111;transform:scaleX(0.9174);transform-origin:0 0;">Внешний...</span>
<div style="left:559px;top:75px;width:100px;height:65px;border:1px solid #ababab;background:linear-gradient(180deg,#f1f1f1,#e6e6e6)"></div>
<span style="left:590.75px;top:117px;font-size:16px;line-height:22px;color:#111;transform:scaleX(0.9596);transform-origin:0 0;">Кадр</span>
<div style="left:659px;top:75px;width:100px;height:65px;border:1px solid #ababab;background:linear-gradient(180deg,#f1f1f1,#e6e6e6)"></div>
<span style="left:691.25px;top:117px;font-size:16px;line-height:22px;color:#111;transform:scaleX(0.9532);transform-origin:0 0;">Цвет</span>
<div style="left:759px;top:75px;width:100px;height:65px;border:1px solid #ababab;background:linear-gradient(180deg,#f1f1f1,#e6e6e6)"></div>
<span style="left:766.55px;top:117px;font-size:16px;line-height:22px;color:#111;transform:scaleX(0.9480);transform-origin:0 0;">Экспозиция</span>
<div style="left:859px;top:75px;width:100px;height:65px;border:1px solid #ababab;background:linear-gradient(180deg,#f1f1f1,#e6e6e6)"></div>
<span style="left:868.45px;top:117px;font-size:16px;line-height:22px;color:#111;transform:scaleX(0.9371);transform-origin:0 0;">Кадриров...</span>
<div style="left:959px;top:75px;width:100px;height:65px;border:1px solid #ababab;background:linear-gradient(180deg,#f1f1f1,#e6e6e6)"></div>
<span style="left:986.85px;top:117px;font-size:16px;line-height:22px;color:#111;transform:scaleX(0.9754);transform-origin:0 0;">Фокус</span>
<div style="left:1059px;top:75px;width:100px;height:65px;border:1px solid #ababab;background:linear-gradient(180deg,#f1f1f1,#e6e6e6)"></div>
<span style="left:1068.35px;top:117px;font-size:16px;line-height:22px;color:#111;transform:scaleX(0.9165);transform-origin:0 0;">Уведомле...</span>
<div style="left:1159px;top:75px;width:100px;height:65px;border:1px solid #ababab;background:linear-gradient(180deg,#f1f1f1,#e6e6e6)"></div>
<span style="left:1168.05px;top:117px;font-size:16px;line-height:22px;color:#111;transform:scaleX(0.9350);transform-origin:0 0;">Предупре...</span>
<div style="left:1259px;top:75px;width:100px;height:65px;border:1px solid #ababab;background:linear-gradient(180deg,#f1f1f1,#e6e6e6)"></div>
<span style="left:1277.65px;top:117px;font-size:16px;line-height:22px;color:#111;transform:scaleX(0.9420);transform-origin:0 0;">Плагины</span>
<div style="left:455.6px;top:71.700px;width:105.400px;height:69.300px;border:1px solid #adadad;border-bottom:none;background:#fff"></div>
<span style="left:467.55px;top:116px;font-size:16px;line-height:22px;color:#111;transform:scaleX(0.9374);transform-origin:0 0;">Изображе...</span>
<svg style="left:290.30px;top:80.00px" width="36.00" height="36.00" viewBox="-18.00 -18.00 36.00 36.00"><defs><clipPath id="cl3"><path clip-rule="evenodd" d="M-18.00 -18.00H18.00V18.00H-18.00zM0 -5.10H18.00V5.10H0z"/></clipPath></defs><circle r="8.00" fill="none" stroke="#141414" stroke-width="2.45"/><circle r="13.10" fill="none" stroke="#141414" stroke-width="2.45" clip-path="url(#cl3)"/></svg>
<svg style="left:391px;top:79px" width="36" height="36" viewBox="0 0 36 36"><path d="M1.500 18C6.500 11 12 8 17.300 8s10.800 3 15.800 10c-5 7-10.500 10.100-15.800 10.100S6.500 25 1.500 18z" fill="none" stroke="#141414" stroke-width="2.200" stroke-linejoin="miter"/><circle cx="17.300" cy="18.100" r="7.500" fill="#141414"/></svg>
<svg style="left:491px;top:77.5px" width="36" height="36" viewBox="0 0 36 36"><rect x="5" y="9.700" width="24.300" height="17.200" fill="none" stroke="#141414" stroke-width="2.600"/><ellipse cx="17.100" cy="16.300" rx="3.500" ry="4" fill="#141414"/><path d="M9.200 26.500c0-3.200 2.400-3.600 5.600-4.400l.6-2.500h3.400l.6 2.500c3.200.8 5.600 1.200 5.600 4.400z" fill="#141414"/></svg>
<svg style="left:591px;top:79px" width="36" height="36" viewBox="0 0 36 36"><path d="M3.400 9h7.700V6.900h12.400V9h7.400v20.200H3.400z" fill="#141414"/><rect x="13.500" y="8" width="7.500" height="1.100" fill="#bdbdbd"/><circle cx="17" cy="19.500" r="6.200" fill="#ededed"/></svg>
<svg style="left:691px;top:79px" width="36" height="36" viewBox="0 0 36 36"><circle cx="17.100" cy="11.700" r="6.800" fill="none" stroke="#141414" stroke-width="2.400"/><circle cx="9.900" cy="23" r="6.700" fill="none" stroke="#141414" stroke-width="2.400"/><circle cx="24.300" cy="23" r="6.700" fill="none" stroke="#141414" stroke-width="2.400"/></svg>
<svg style="left:791px;top:79px" width="36" height="36" viewBox="0 0 36 36"><path d="M2.200 28V17.800C9 19.800 14 16 20.600 6.800L23.300 11.800 25.200 9.800 27.200 13.500 29 11.600 30.600 16 32.200 13.400V28z" fill="none" stroke="#141414" stroke-width="2.400" stroke-linejoin="miter"/></svg>
<svg style="left:891px;top:79px" width="36" height="36" viewBox="0 0 36 36"><path d="M8.700 1.900V26.300H33.500M1.300 9H26V34.100" fill="none" stroke="#141414" stroke-width="2.700"/></svg>
<svg style="left:991px;top:79px" width="36" height="36" viewBox="0 0 36 36"><rect x="3.500" y="8.400" width="26" height="18" fill="none" stroke="#141414" stroke-width="2.500"/><path d="M6.200 17.700h5.500M13.300 17.700h6.200M21 17.700h5.600M13.300 12.500h6.200M13.300 22.400h6.200" stroke="#141414" stroke-width="2.600"/></svg>
<svg style="left:1091px;top:79px" width="36" height="36" viewBox="0 0 36 36"><path d="M3.400 8.400H32.200V28H22.500L17.600 32.700 12.800 28H3.400z" fill="none" stroke="#141414" stroke-width="2.500" stroke-linejoin="miter"/></svg>
<svg style="left:1191px;top:79px" width="36" height="36" viewBox="0 0 36 36"><path d="M17 6.500L30.600 29.500H3.600z" fill="none" stroke="#141414" stroke-width="2.400" stroke-linejoin="round"/><text x="17.100" y="27.300" text-anchor="middle" font-family="Liberation Sans,sans-serif" font-weight="700" font-size="12.500" fill="#141414">?</text></svg>
<svg style="left:1291px;top:79px" width="36" height="36" viewBox="0 0 36 36"><path d="M7.500 12.200H14.800V11A3.400 3.400 0 1 1 19.200 11V12.200H26.800V18.200A3.200 3.200 0 0 0 26.800 24.600V29.600H7.500z" fill="none" stroke="#141414" stroke-width="2.600" stroke-linejoin="miter"/></svg>
<div style="left:256px;top:140.5px;width:1104.7px;height:726px;background:#fff;"></div>
<div style="left:272px;top:156px;width:1073px;height:702.4px;background:#dbdbdb;"></div>
<span style="left:279.65px;top:156px;font-size:16px;line-height:22px;color:#acacac;transform:scaleX(0.9127);transform-origin:0 0;">Кэш</span>
<div style="left:280px;top:176px;width:1057px;height:1px;background:#d5d5d5;"></div>
<div style="left:280px;top:177px;width:1057px;height:1px;background:#dfdfdf;"></div>
<span style="left:279.35px;top:198px;font-size:16px;line-height:22px;color:#151515;transform:scaleX(0.9362);transform-origin:0 0;">Размер предварительного пр...</span>
<div style="left:501px;top:194.2px;width:836px;height:27.500px;border:1px solid #adadad;background:linear-gradient(180deg,#f2f2f2,#e6e6e6)"></div>
<span style="left:507.95px;top:198px;font-size:16px;line-height:22px;color:#151515;transform:scaleX(0.9173);transform-origin:0 0;">2560 (Рекомендуется)</span>
<svg style="left:1320px;top:202.2px" width="11" height="9" viewBox="0 0 11 9"><path d="M2.200 2.300L5.500 5.900 8.800 2.300" fill="none" stroke="#444" stroke-width="1.900"/></svg>
<span style="left:499.02px;top:225px;font-size:13px;line-height:18px;color:#a9a9a9;transform:scaleX(0.9591);transform-origin:0 0;">Рекомендуемый размер изображения для предварительного просмотра основан на ширине разрешения экрана для оптимальной</span>
<span style="left:499.02px;top:240px;font-size:13px;line-height:18px;color:#a9a9a9;transform:scaleX(0.9648);transform-origin:0 0;">производительности</span>
<span style="left:284.85px;top:264px;font-size:16px;line-height:22px;color:#151515;transform:scaleX(0.9319);transform-origin:0 0;">Создание предварительного...</span>
<div style="left:501px;top:260.2px;width:836px;height:27.500px;border:1px solid #adadad;background:linear-gradient(180deg,#f2f2f2,#e6e6e6)"></div>
<span style="left:507.95px;top:264px;font-size:16px;line-height:22px;color:#151515;transform:scaleX(0.9307);transform-origin:0 0;">Оптимизировано для качества (рекомендуется)</span>
<svg style="left:1320px;top:268.2px" width="11" height="9" viewBox="0 0 11 9"><path d="M2.200 2.300L5.500 5.900 8.800 2.300" fill="none" stroke="#444" stroke-width="1.900"/></svg>
<span style="left:499.02px;top:290px;font-size:13px;line-height:18px;color:#a9a9a9;transform:scaleX(0.9470);transform-origin:0 0;">Измените эту настройку, если предварительный просмотр создается слишком долго. Эта настройка не влияет на результаты экспорта.</span>
<div style="left:501px;top:310px;width:17px;height:16.800px;border:1px solid #4a4a4a;background:#fff"></div>
<span style="left:524.75px;top:308px;font-size:16px;line-height:22px;color:#151515;transform:scaleX(0.9326);transform-origin:0 0;">Использовать старый формат предварительного просмотра</span>
<span style="left:499.02px;top:331px;font-size:13px;line-height:18px;color:#a9a9a9;transform:scaleX(0.9464);transform-origin:0 0;">Если эта функция включена, в новом предварительном просмотре будет использоваться более старый формат из Capture One 23 (16.2) и более</span>
<span style="left:499.02px;top:347px;font-size:13px;line-height:18px;color:#a9a9a9;transform:scaleX(0.9861);transform-origin:0 0;">ранних</span>
<span style="left:279.65px;top:376px;font-size:16px;line-height:22px;color:#acacac;transform:scaleX(0.9076);transform-origin:0 0;">Упаковка в формате EIP (только для сессий)</span>
<div style="left:280px;top:396px;width:1057px;height:1px;background:#d5d5d5;"></div>
<div style="left:280px;top:397px;width:1057px;height:1px;background:#dfdfdf;"></div>
<div style="left:501px;top:416.2px;width:17px;height:16.800px;border:1px solid #4a4a4a;background:#fff"></div>
<span style="left:524.75px;top:414px;font-size:16px;line-height:22px;color:#151515;transform:scaleX(0.9247);transform-origin:0 0;">Упаковать в формате EIP при импорте</span>
<div style="left:501px;top:440px;width:17px;height:16.800px;border:1px solid #4a4a4a;background:#fff"></div>
<span style="left:524.75px;top:438px;font-size:16px;line-height:22px;color:#151515;transform:scaleX(0.9231);transform-origin:0 0;">Запаковать в формате EIP при съемке в компьютер</span>
<span style="left:499.02px;top:461px;font-size:13px;line-height:18px;color:#a9a9a9;transform:scaleX(0.9157);transform-origin:0 0;">JPEG и обработанные файлы TIFF не будут запакованы как EIP</span>
<span style="left:279.65px;top:490px;font-size:16px;line-height:22px;color:#acacac;transform:scaleX(0.9310);transform-origin:0 0;">Редактирование</span>
<div style="left:280px;top:510px;width:1057px;height:1px;background:#d5d5d5;"></div>
<div style="left:280px;top:511px;width:1057px;height:1px;background:#dfdfdf;"></div>
<div style="left:501px;top:529.2px;width:17px;height:16.800px;border:1px solid #4a4a4a;background:#fff"></div>
<svg style="left:501px;top:529.2px" width="17" height="17" viewBox="0 0 17 17"><path d="M3.700 8.700L8.400 13 14.500 3.700" fill="none" stroke="#151515" stroke-width="2.300"/></svg>
<span style="left:524.75px;top:527px;font-size:16px;line-height:22px;color:#151515;transform:scaleX(0.8990);transform-origin:0 0;">Разрешить редактирование JPEG</span>
<div style="left:501px;top:553.2px;width:17px;height:16.800px;border:1px solid #4a4a4a;background:#fff"></div>
<svg style="left:501px;top:553.2px" width="17" height="17" viewBox="0 0 17 17"><path d="M3.700 8.700L8.400 13 14.500 3.700" fill="none" stroke="#151515" stroke-width="2.300"/></svg>
<span style="left:524.75px;top:551px;font-size:16px;line-height:22px;color:#151515;transform:scaleX(0.9080);transform-origin:0 0;">Разрешить редактирование TIFF</span>
<div style="left:501px;top:577.2px;width:17px;height:16.800px;border:1px solid #4a4a4a;background:#fff"></div>
<svg style="left:501px;top:577.2px" width="17" height="17" viewBox="0 0 17 17"><path d="M3.700 8.700L8.400 13 14.500 3.700" fill="none" stroke="#151515" stroke-width="2.300"/></svg>
<span style="left:524.75px;top:575px;font-size:16px;line-height:22px;color:#151515;transform:scaleX(0.9153);transform-origin:0 0;">Разрешить редактирование PNG-файлов</span>
<span style="left:282.15px;top:604px;font-size:16px;line-height:22px;color:#151515;transform:scaleX(0.9657);transform-origin:0 0;">Движок обработки по умолч...</span>
<div style="left:501px;top:600.3px;width:836px;height:27.500px;border:1px solid #adadad;background:linear-gradient(180deg,#f2f2f2,#e6e6e6)"></div>
<span style="left:507.95px;top:604px;font-size:16px;line-height:22px;color:#151515;transform:scaleX(0.9345);transform-origin:0 0;">Capture One 20/21</span>
<svg style="left:1320px;top:608.3px" width="11" height="9" viewBox="0 0 11 9"><path d="M2.200 2.300L5.500 5.900 8.800 2.300" fill="none" stroke="#444" stroke-width="1.900"/></svg>
<span style="left:279.65px;top:642px;font-size:16px;line-height:22px;color:#acacac;transform:scaleX(0.9251);transform-origin:0 0;">Метаданные</span>
<div style="left:280px;top:662px;width:1057px;height:1px;background:#d5d5d5;"></div>
<div style="left:280px;top:663px;width:1057px;height:1px;background:#dfdfdf;"></div>
<span style="left:320.95px;top:685px;font-size:16px;line-height:22px;color:#151515;transform:scaleX(0.9353);transform-origin:0 0;">Автосинхронизация XMP</span>
<div style="left:501px;top:681.2px;width:836px;height:27.500px;border:1px solid #adadad;background:linear-gradient(180deg,#f2f2f2,#e6e6e6)"></div>
<span style="left:507.95px;top:685px;font-size:16px;line-height:22px;color:#151515;transform:scaleX(0.9607);transform-origin:0 0;">Нет</span>
<svg style="left:1320px;top:689.2px" width="11" height="9" viewBox="0 0 11 9"><path d="M2.200 2.300L5.500 5.900 8.800 2.300" fill="none" stroke="#444" stroke-width="1.900"/></svg>
<div style="left:501px;top:714.6px;width:17px;height:16.800px;border:1px solid #4a4a4a;background:#fff"></div>
<span style="left:524.75px;top:712px;font-size:16px;line-height:22px;color:#151515;transform:scaleX(0.9225);transform-origin:0 0;">Использовать встроенный XMP вместо встроенного IPTC</span>
<div style="left:501px;top:738.4px;width:17px;height:16.800px;border:1px solid #4a4a4a;background:#fff"></div>
<svg style="left:501px;top:738.4px" width="17" height="17" viewBox="0 0 17 17"><path d="M3.700 8.700L8.400 13 14.500 3.700" fill="none" stroke="#151515" stroke-width="2.300"/></svg>
<span style="left:524.75px;top:736px;font-size:16px;line-height:22px;color:#151515;transform:scaleX(0.9239);transform-origin:0 0;">Использовать XMP вместо встроенных метаданных</span>
<div style="left:501px;top:762.3px;width:17px;height:16.800px;border:1px solid #4a4a4a;background:#fff"></div>
<svg style="left:501px;top:762.3px" width="17" height="17" viewBox="0 0 17 17"><path d="M3.700 8.700L8.400 13 14.500 3.700" fill="none" stroke="#151515" stroke-width="2.300"/></svg>
<span style="left:524.75px;top:760px;font-size:16px;line-height:22px;color:#151515;transform:scaleX(0.9306);transform-origin:0 0;">Синхронизация срочности IPTC с цветовой меткой</span>
<div style="left:501px;top:786.2px;width:17px;height:16.800px;border:1px solid #4a4a4a;background:#fff"></div>
<span style="left:524.75px;top:784px;font-size:16px;line-height:22px;color:#151515;transform:scaleX(0.9321);transform-origin:0 0;">Автоматическое применение метаданных обрезки из файла или сопроводительного XMP</span>
<div style="left:1143px;top:834px;width:194px;height:24.500px;border:1px solid #6e6e6e;background:#e1e1e1"></div>
<span style="left:1149.45px;top:836px;font-size:16px;line-height:22px;color:#151515;transform:scaleX(0.9592);transform-origin:0 0;">Настройки по умолчанию</span>
</body></html>
